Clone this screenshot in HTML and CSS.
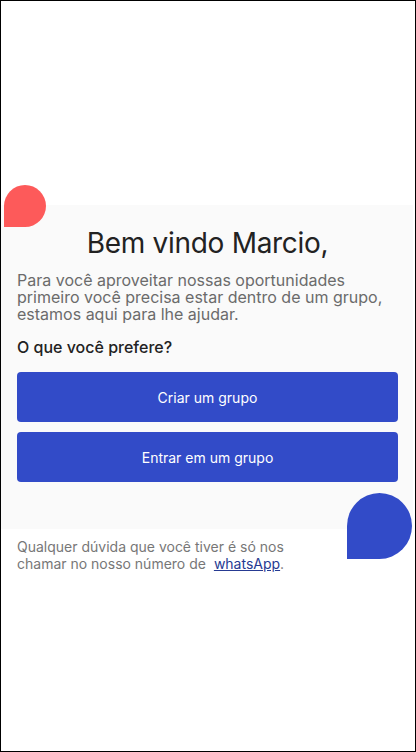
FILE: index.html
```html
<!DOCTYPE html>
<html lang="pt-BR">
<head>
<meta charset="utf-8">
<title>Bem vindo</title>
<link rel="stylesheet" href="styles.css">
</head>
<body>
<div class="frame">
  <main class="screen">
    <section class="panel">
      <span class="blob blob-red"></span>
      <span class="blob blob-blue"></span>
      <h1 class="title">Bem vindo Marcio,</h1>
      <p class="intro">Para você aproveitar nossas oportunidades primeiro você precisa estar dentro de um grupo, estamos aqui para lhe ajudar.</p>
      <h2 class="question">O que você prefere?</h2>
      <div class="actions">
        <button class="btn" type="button">Criar um grupo</button>
        <button class="btn" type="button">Entrar em um grupo</button>
      </div>
    </section>
    <p class="help">Qualquer dúvida que você tiver é só nos chamar no nosso número de <a class="help-link" href="#">whatsApp</a>.</p>
  </main>
</div>
</body>
</html>
```
FILE: styles.css
```css
* { box-sizing: border-box; }
html, body { margin: 0; padding: 0; background: #fff; }
body { font-family: Inter, "Noto Sans", sans-serif; }
.frame {
  width: 416px;
  height: 752px;
  border: 1px solid #000;
  overflow: hidden;
}
.screen {
  display: flex;
  flex-direction: column;
  padding-top: 204px;
}
.panel {
  position: relative;
  width: 412px;
  background: #fafafa;
  padding: 21px 15px 47px 16px;
  display: flex;
  flex-direction: column;
}
.blob {
  position: absolute;
  border-radius: 50% 50% 50% 0;
}
.blob-red {
  width: 42px;
  height: 42px;
  left: 3px;
  top: -20px;
  background: #fd5a5a;
}
.blob-blue {
  width: 65px;
  height: 66px;
  left: 346px;
  top: 288px;
  background: #324bc8;
}
.title {
  margin: 0;
  font-size: 28px;
  line-height: 34px;
  font-weight: 400;
  letter-spacing: -0.3px;
  color: #222;
  text-align: center;
}
.intro {
  margin: 12px 0 0;
  font-size: 16px;
  line-height: 17px;
  color: #6b6b6b;
}
.question {
  margin: 15px 0 0;
  font-size: 16px;
  line-height: 19px;
  font-weight: 500;
  color: #222;
}
.actions {
  margin-top: 15px;
  display: flex;
  flex-direction: column;
  gap: 10px;
}
.btn {
  height: 50px;
  border: 0;
  border-radius: 4px;
  background: #324bc8;
  color: #fff;
  font-family: Inter, "Noto Sans", sans-serif;
  font-size: 14px;
  font-weight: 400;
}
.help {
  margin: 9px 0 0 16px;
  width: 290px;
  font-size: 14px;
  line-height: 17px;
  color: #777;
}
.help-link {
  margin-left: 4px;
  color: #263a92;
  text-decoration: underline;
}
```
